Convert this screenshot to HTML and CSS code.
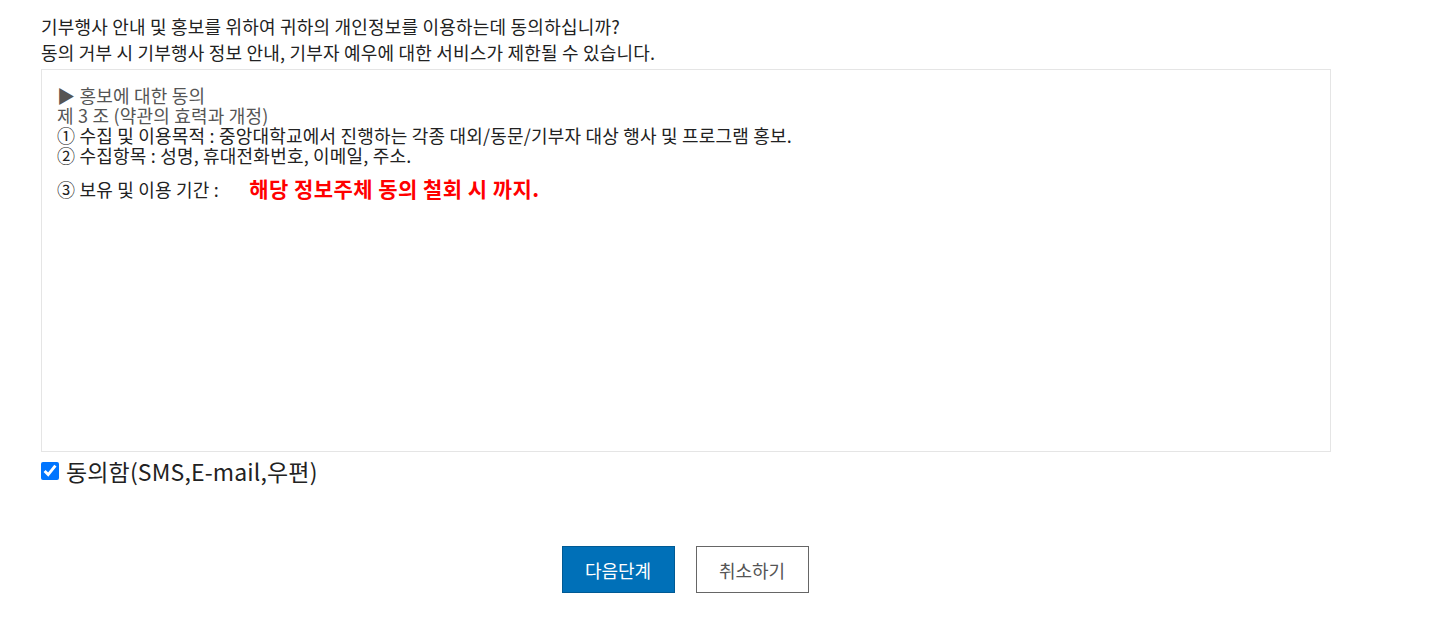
FILE: index.html
```html
<!DOCTYPE html>
<html>
<head>
    <title>개인정보 동의</title>
    <link rel="stylesheet" href="styles.css">
</head>
    <body>
        <div class="agree-wrap">
            <p class="agree-intro">
                기부행사 안내 및 홍보를 위하여 귀하의 개인정보를 이용하는데 동의하십니까?<br>
                동의 거부 시 기부행사 정보 안내, 기부자 예우에 대한 서비스가 제한될 수 있습니다.
            </p>
            <div class="terms-box">
                <p class="terms-title">▶ 홍보에 대한 동의</p>
                <p class="terms-title">제 3 조 (약관의 효력과 개정)</p>
                <p>① 수집 및 이용목적 : 중앙대학교에서 진행하는 각종 대외/동문/기부자 대상 행사 및 프로그램 홍보.</p>
                <p>② 수집항목 : 성명, 휴대전화번호, 이메일, 주소.</p>
                <p class="terms-period">③ 보유 및 이용 기간 : <span class="red-text">해당 정보주체 동의 철회 시 까지.</span></p>
            </div>
            <div class="agree-check">
                <input type="checkbox" id="agree" checked>
                <label for="agree">동의함(SMS,E-mail,우편)</label>
            </div>
            <div class="btn-area">
                <button type="button" class="btn btn-next">다음단계</button>
                <button type="button" class="btn btn-cancel">취소하기</button>
            </div>
        </div>
    </body>
</html>
```
FILE: styles.css
```css
body {
    margin: 0;
    font-family: "Noto Sans CJK KR", "Noto Sans", sans-serif;
    color: #222;
    background-color: #fff;
}
.agree-wrap {
    width: 1290px;
    padding: 13px 0 0 41px;
}
.agree-intro {
    margin: 0 0 4px;
    font-size: 18px;
    line-height: 26px;
    letter-spacing: 0.2px;
}
.terms-box {
    height: 383px;
    padding: 15px 15px;
    box-sizing: border-box;
    border: 1px solid #e5e5e5;
    font-size: 18px;
    line-height: 20px;
    letter-spacing: 0.2px;
}
.terms-box p {
    margin: 0;
}
.terms-title {
    color: #555;
}
.terms-period {
    margin-top: 10px !important;
    line-height: 26px;
}
.red-text {
    margin-left: 26px;
    color: #f00;
    font-size: 21px;
    font-weight: bold;
    letter-spacing: 0.45px;
}
.agree-check {
    display: flex;
    align-items: center;
    margin-top: 4px;
}
.agree-check input {
    width: 18px;
    height: 18px;
    margin: 0 7px 0 0;
}
.agree-check label {
    font-size: 23px;
    line-height: 30px;
    letter-spacing: 0.15px;
}
.btn-area {
    display: flex;
    justify-content: center;
    gap: 21px;
    margin-top: 60px;
    padding-right: 2px;
}
.btn {
    width: 113px;
    height: 47px;
    font-family: "Noto Sans CJK KR", sans-serif;
    font-size: 18px;
    cursor: pointer;
}
.btn-next {
    color: #fff;
    background-color: #0070b8;
    border: 1px solid #005a94;
}
.btn-cancel {
    color: #555;
    background-color: #fff;
    border: 1px solid #666;
}
```
